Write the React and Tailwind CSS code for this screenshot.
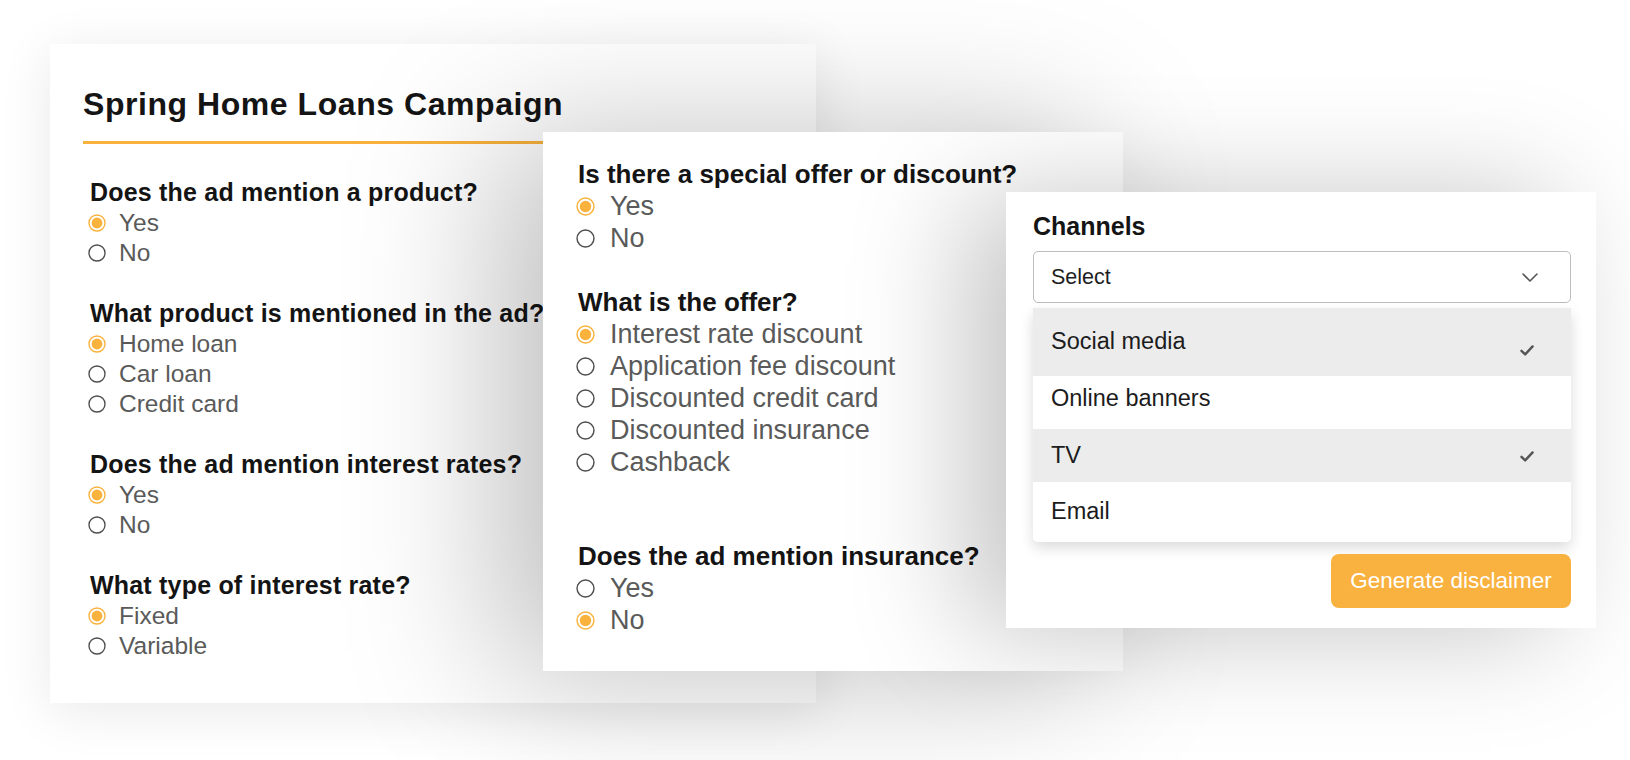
const ORANGE = "#f9b23c";

function Radio({ checked, size }) {
  return (
    <svg width={size} height={size} viewBox="0 0 20 20" className="shrink-0">
      <circle cx="10" cy="10" r="8.9" fill="none" stroke={checked ? ORANGE : "#4e4e4e"} strokeWidth="1.5" />
      {checked && <circle cx="10" cy="10" r="6" fill={ORANGE} />}
    </svg>
  );
}

function Check() {
  return (
    <svg width="14" height="11" viewBox="0 0 14 11" className="shrink-0">
      <path d="M1.5 5.8 L5.2 9.4 L12.6 1.4" fill="none" stroke="#555" strokeWidth="2.4" strokeLinecap="round" strokeLinejoin="round" />
    </svg>
  );
}

// card 1 sizing
const small = {
  question: "h-[30px] flex items-center pl-[2px] text-[25px] font-bold tracking-[0.2px] text-[#141414]",
  option: "h-[30px] flex items-center gap-[13px] text-[24.5px] text-[#5a5a5a]",
  radio: 18,
};

// card 2 is a touch larger
const large = {
  question: "h-[32px] flex items-center pl-[2px] text-[26px] font-bold text-[#141414]",
  option: "h-[32px] flex items-center gap-[15px] text-[27px] text-[#5a5a5a]",
  radio: 19,
};

function Question({ title, options, selected, sizes, className = "" }) {
  return (
    <div className={className}>
      <div className={sizes.question}>{title}</div>
      {options.map((opt) => (
        <div key={opt} className={sizes.option}>
          <Radio checked={opt === selected} size={sizes.radio} />
          <span>{opt}</span>
        </div>
      ))}
    </div>
  );
}

const channels = [
  { name: "Social media", checked: true, row: "h-[68px] bg-[#ececec]", check: "mt-[16px]" },
  { name: "Online banners", checked: false, row: "h-[53px] bg-white pb-[8px]", check: "" },
  { name: "TV", checked: true, row: "h-[53px] bg-[#ececec]", check: "mt-[2px]" },
  { name: "Email", checked: false, row: "h-[60px] bg-white", check: "" },
];

export default function App() {
  return (
    <div className="relative w-[1630px] h-[760px] bg-white overflow-hidden font-['Liberation_Sans',Arial,sans-serif]">
      {/* campaign card */}
      <div className="absolute left-[50px] top-[44px] w-[766px] h-[659px] bg-white shadow-[0_8px_50px_rgba(0,0,0,0.09)] pt-[45px] px-[33px]">
        <h1 className="h-[31px] leading-[31px] text-[32px] font-bold tracking-[0.55px] text-[#141414]">
          Spring Home Loans Campaign
        </h1>
        <div className="mt-[21px] h-[3px] bg-[#f9b23c]" />
        <div className="mt-[34px] pl-[5px] flex flex-col gap-[31px]">
          <Question sizes={small} title="Does the ad mention a product?" options={["Yes", "No"]} selected="Yes" />
          <Question
            sizes={small}
            title="What product is mentioned in the ad?"
            options={["Home loan", "Car loan", "Credit card"]}
            selected="Home loan"
          />
          <Question sizes={small} title="Does the ad mention interest rates?" options={["Yes", "No"]} selected="Yes" />
          <Question sizes={small} title="What type of interest rate?" options={["Fixed", "Variable"]} selected="Fixed" />
        </div>
      </div>

      {/* offer card */}
      <div className="absolute left-[543px] top-[132px] w-[580px] h-[539px] bg-white shadow-[-45px_4px_140px_rgba(0,0,0,0.25)] pt-[26px] pl-[33px]">
        <Question sizes={large} title="Is there a special offer or discount?" options={["Yes", "No"]} selected="Yes" />
        <Question
          className="mt-[32px]"
          sizes={large}
          title="What is the offer?"
          options={[
            "Interest rate discount",
            "Application fee discount",
            "Discounted credit card",
            "Discounted insurance",
            "Cashback",
          ]}
          selected="Interest rate discount"
        />
        <Question
          className="mt-[62px]"
          sizes={large}
          title="Does the ad mention insurance?"
          options={["Yes", "No"]}
          selected="No"
        />
      </div>

      {/* channels card */}
      <div className="absolute left-[1006px] top-[192px] w-[590px] h-[436px] bg-white shadow-[-40px_4px_110px_rgba(0,0,0,0.23)] pt-[19px] pl-[27px] pr-[25px]">
        <div className="h-[30px] leading-[30px] text-[25px] font-bold text-[#141414]">Channels</div>
        <div className="mt-[10px] h-[52px] border-[1.5px] border-[#bdbdbd] rounded-[5px] flex items-center justify-between pl-[17px] pr-[32px]">
          <span className="text-[21.5px] text-[#1e1e1e]">Select</span>
          <svg width="16" height="9" viewBox="0 0 16 9">
            <path d="M1 1 L8 8 L15 1" fill="none" stroke="#555" strokeWidth="1.6" strokeLinecap="round" strokeLinejoin="round" />
          </svg>
        </div>
        <div className="mt-[5px] rounded-b-[5px] overflow-hidden shadow-[0_6px_14px_rgba(0,0,0,0.14)]">
          {channels.map((c) => (
            <div key={c.name} className={`flex items-center justify-between pl-[18px] pr-[37px] ${c.row}`}>
              <span className="text-[23.5px] text-[#1c1c1c]">{c.name}</span>
              {c.checked && (
                <span className={c.check}>
                  <Check />
                </span>
              )}
            </div>
          ))}
        </div>
        <div className="mt-[12px] flex justify-end">
          <button className="w-[240px] h-[54px] rounded-[8px] bg-[#f9b23f] text-white text-[22.5px]">
            Generate disclaimer
          </button>
        </div>
      </div>
    </div>
  );
}
